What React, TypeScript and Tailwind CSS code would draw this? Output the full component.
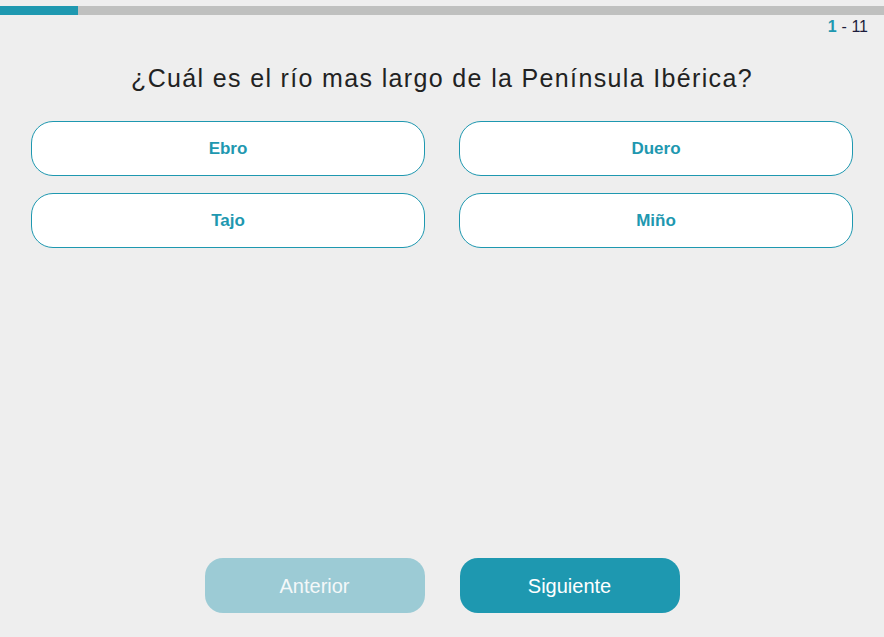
import { FC } from "react";

const options = ["Ebro", "Duero", "Tajo", "Miño"];

const OptionButton: FC<{ label: string }> = ({ label }) => (
    <button className="h-[55px] rounded-[22px] border border-[#1e98b0] bg-white text-[17px] font-bold text-[#1e98b0]">
        {label}
    </button>
);

const App: FC = () => {
    return (
        <div className="flex min-h-screen flex-col bg-[#eeeeee] font-['Liberation_Sans',Arial,sans-serif]">
            {/* Progress */}
            <div className="mt-[6px] flex h-[9px] w-full bg-[#bfc0bf]">
                <div className="h-full w-[78px] bg-[#1e98b0]"></div>
            </div>

            {/* Counter */}
            <div className="flex justify-end pr-[16px] pt-[3px] text-[16px] leading-[18px] text-[#1c1c3c]">
                <span className="font-bold text-[#1e98b0]">1</span>
                <span className="ml-[5px]">- 11</span>
            </div>

            {/* Question */}
            <h1 className="mt-[27px] text-center text-[25px] leading-[30px] tracking-[1.35px] text-[#222222]">
                ¿Cuál es el río mas largo de la Península Ibérica?
            </h1>

            {/* Options */}
            <div className="mt-[28px] grid grid-cols-2 gap-x-[34px] gap-y-[17px] px-[31px]">
                {options.map((o) => (
                    <OptionButton key={o} label={o} />
                ))}
            </div>

            {/* Footer */}
            <div className="mt-auto flex justify-center gap-[35px] pb-[24px]">
                <button className="h-[55px] w-[220px] rounded-[18px] bg-[#9ccbd5] text-[20px] text-[#f4f8f9]">
                    Anterior
                </button>
                <button className="h-[55px] w-[220px] rounded-[18px] bg-[#1e98b0] text-[20px] text-white">
                    Siguiente
                </button>
            </div>
        </div>
    );
};

export default App;
